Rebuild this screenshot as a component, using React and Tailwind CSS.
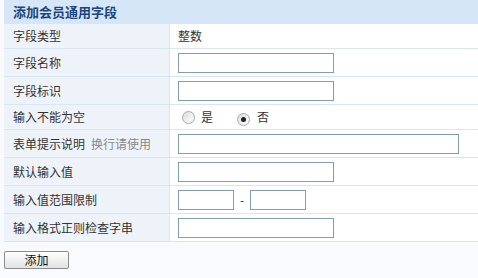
import React from "react";

const font = { fontFamily: '"Noto Sans CJK SC", "Liberation Sans", sans-serif' };

function Input({ w }) {
  return (
    <div className={`h-[20px] ${w} border border-[#7f9db9] bg-white`} />
  );
}

function Radio({ checked }) {
  return (
    <span className="relative inline-flex h-[13px] w-[13px] items-center justify-center rounded-full border border-[#a9a9a9] bg-gradient-to-br from-[#dcdcdc] to-white">
      {checked && <span className="h-[5px] w-[5px] rounded-full bg-[#222]" />}
    </span>
  );
}

function Row({ label, hint, h, children }) {
  return (
    <div className={`flex ${h} border-b border-[#d6e6f2]`}>
      <div className="flex w-[166px] shrink-0 items-center border-r border-[#d6e6f2] bg-[#eef3f9] pl-[9px] text-[12px] text-[#333]">
        {label}
        {hint && <span className="ml-[6px] text-[#888]">{hint}</span>}
      </div>
      <div className="flex flex-1 items-center bg-white pl-[8px] text-[12px] text-[#333]">
        {children}
      </div>
    </div>
  );
}

export default function App() {
  return (
    <div className="h-[278px] w-[478px] overflow-hidden bg-[#f9fafd] pl-[4px]" style={font}>
      <div className="flex h-[24px] items-center bg-[#d5e7f7] pl-[9px] text-[13px] font-bold text-[#1b4580]">
        添加会员通用字段
      </div>
      <Row label="字段类型" h="h-[25px]">整数</Row>
      <Row label="字段名称" h="h-[28px]"><Input w="w-[156px]" /></Row>
      <Row label="字段标识" h="h-[28px]"><Input w="w-[156px]" /></Row>
      <Row label="输入不能为空" h="h-[25px]">
        <div className="flex items-center pl-[4px]">
          <Radio />
          <span className="ml-[6px]">是</span>
          <span className="ml-[24px]"><Radio checked /></span>
          <span className="ml-[7px]">否</span>
        </div>
      </Row>
      <Row label="表单提示说明" hint="换行请使用" h="h-[28px]"><Input w="w-[281px]" /></Row>
      <Row label="默认输入值" h="h-[28px]"><Input w="w-[156px]" /></Row>
      <Row label="输入值范围限制" h="h-[28px]">
        <Input w="w-[56px]" />
        <span className="mx-[6px] w-[4px] text-center">-</span>
        <Input w="w-[56px]" />
      </Row>
      <Row label="输入格式正则检查字串" h="h-[28px]"><Input w="w-[156px]" /></Row>
      <div className="pt-[9px]">
        <button className="flex h-[18px] w-[65px] items-center justify-center rounded-[2px] border border-[#8c8c8c] bg-gradient-to-b from-white to-[#e2e2e2] text-[12px] text-[#111]">
          添加
        </button>
      </div>
    </div>
  );
}
